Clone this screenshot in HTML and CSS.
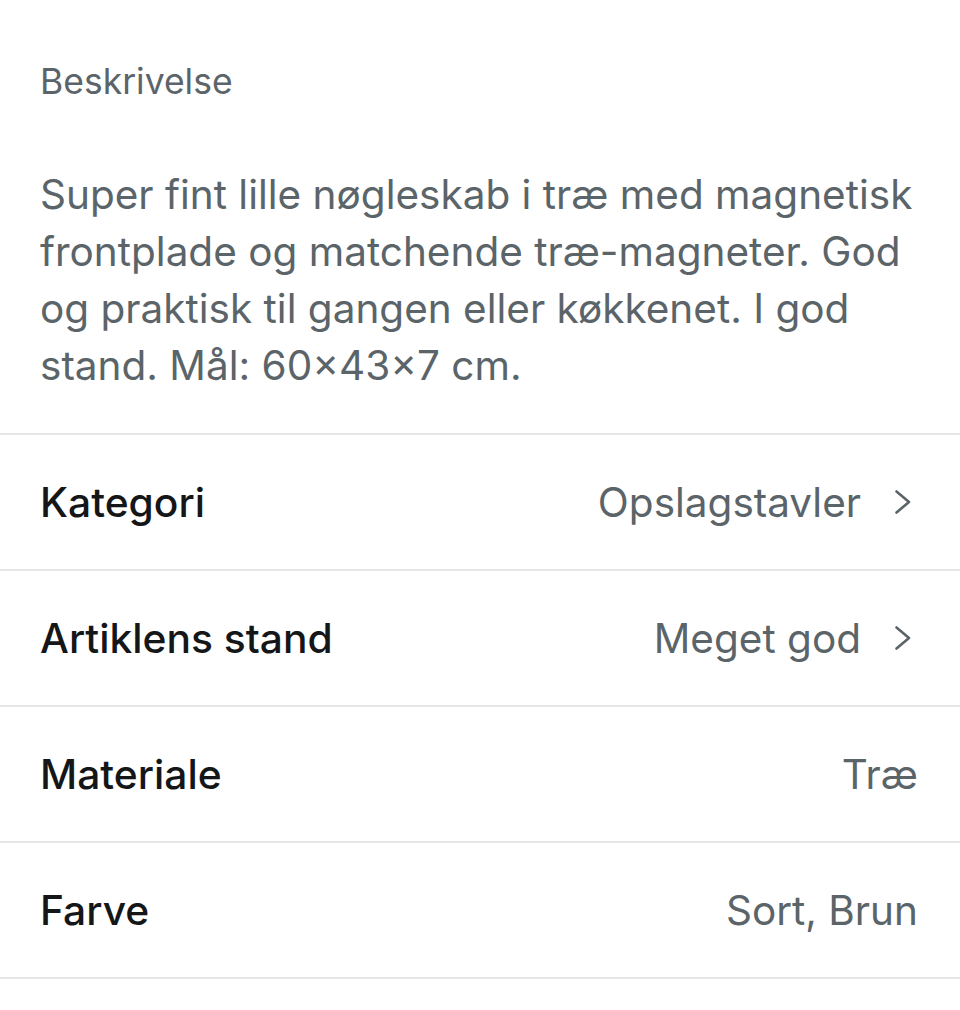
FILE: index.html
```html
<!DOCTYPE html>
<html lang="da">

<head>
  <meta charset="utf-8">
  <title>Beskrivelse</title>
  <link rel="stylesheet" href="styles.css">
</head>

<body>
  <section class="beskrivelse">
    <h2 class="overskrift">Beskrivelse</h2>
    <p class="tekst">Super fint lille nøgleskab i træ med magnetisk frontplade og matchende træ-magneter. God og praktisk til gangen eller køkkenet. I god stand. Mål: 60×43×7 cm.</p>
  </section>

  <ul class="detaljer">
    <li class="raekke">
      <span class="navn">Kategori</span>
      <span class="vaerdi">Opslagstavler
        <svg class="pil" viewBox="0 0 18 24" width="18" height="24">
          <polyline points="2.5,1.5 15,12 2.5,22.5" />
        </svg>
      </span>
    </li>
    <li class="raekke">
      <span class="navn">Artiklens stand</span>
      <span class="vaerdi">Meget god
        <svg class="pil" viewBox="0 0 18 24" width="18" height="24">
          <polyline points="2.5,1.5 15,12 2.5,22.5" />
        </svg>
      </span>
    </li>
    <li class="raekke">
      <span class="navn">Materiale</span>
      <span class="vaerdi">Træ</span>
    </li>
    <li class="raekke">
      <span class="navn">Farve</span>
      <span class="vaerdi">Sort, Brun</span>
    </li>
  </ul>
</body>

</html>
```

FILE: styles.css
```css
body {
  margin: 0;
  background-color: #ffffff;
  font-family: Inter, "Noto Sans", sans-serif;
  color: #1b1d1f;
}

.beskrivelse {
  padding: 58px 40px 39px 40px;
  border-bottom: 2px solid #e6e6e6;
}

.overskrift {
  margin: 0 0 60px 0;
  font-size: 35.5px;
  font-weight: 400;
  line-height: 48px;
  color: #5b6469;
}

.tekst {
  margin: 0;
  font-size: 40.5px;
  line-height: 57px;
  color: #5b6469;
}

.detaljer {
  list-style: none;
  margin: 0;
  padding: 0;
}

.raekke {
  display: flex;
  justify-content: space-between;
  align-items: center;
  height: 134px;
  padding: 0 42px 0 40px;
  border-bottom: 2px solid #e6e6e6;
}

.navn {
  font-size: 40.75px;
  font-weight: 500;
  color: #141618;
}

.vaerdi {
  display: flex;
  align-items: center;
  gap: 33px;
  font-size: 40.5px;
  color: #5b6469;
}

.pil {
  margin-right: 6px;
  fill: none;
  stroke: #5b6469;
  stroke-width: 2.6;
  stroke-linecap: round;
  stroke-linejoin: round;
}
```
